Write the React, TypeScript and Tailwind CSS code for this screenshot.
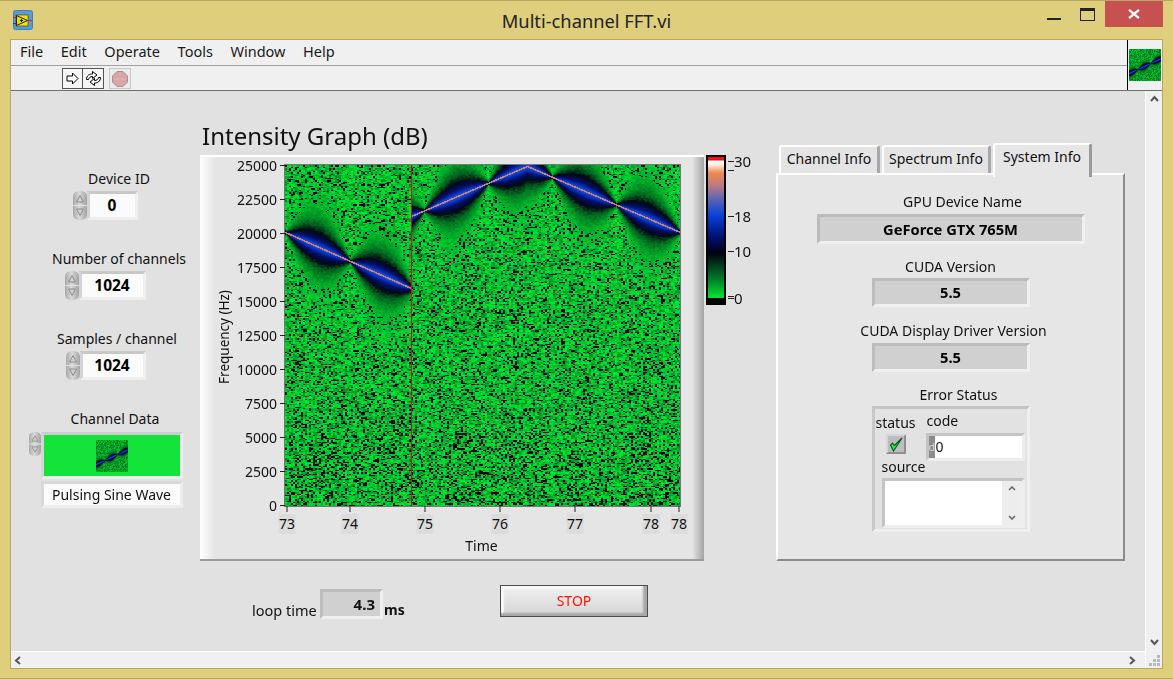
import { useEffect, useRef } from "react";

const FONT = "[font-family:'Noto_Sans',sans-serif]";

// colour ramp of the intensity scale: [dB, r, g, b]
const ramp: number[][] = [
  [0, 0, 235, 50],
  [3, 0, 175, 40],
  [7, 0, 95, 30],
  [10, 0, 8, 18],
  [14, 0, 15, 110],
  [18, 10, 65, 215],
  [22, 105, 105, 175],
  [26, 240, 135, 80],
  [30, 255, 250, 240],
];

const colorAt = (v: number) => {
  if (v < 0) return [4, 4, 4];
  for (let i = 1; i < ramp.length; i++) {
    if (v <= ramp[i][0]) {
      const a = ramp[i - 1];
      const b = ramp[i];
      const t = (v - a[0]) / (b[0] - a[0]);
      return [a[1] + (b[1] - a[1]) * t, a[2] + (b[2] - a[2]) * t, a[3] + (b[3] - a[3]) * t];
    }
  }
  return [255, 255, 255];
};

const rnd = (a: number, b: number) => {
  let h = (a * 374761393 + b * 668265263) | 0;
  h = Math.imul(h ^ (h >>> 13), 1274126177);
  h = Math.imul(h ^ (h >>> 16), 2246822519);
  return ((h ^ (h >>> 14)) >>> 0) / 4294967296;
};

const chirp = (x: number) => {
  if (x < 126) return { y: 67 + (56 / 126) * x, zero: 65 };
  if (x < 242) return { y: 51 - (50 / 116) * (x - 126), zero: 11 };
  return { y: 1 + (66 / 153) * (x - 242), zero: 11 };
};

const drawGraph = (c: HTMLCanvasElement) => {
  const ctx = c.getContext("2d");
  if (!ctx) return;
  const img = ctx.createImageData(c.width, c.height);
  for (let py = 0; py < c.height; py++) {
    for (let px = 0; px < c.width; px++) {
      const col = Math.floor(px / 2);
      const row = Math.floor(py / 1.34);
      const { y, zero } = chirp(px);
      const phase = Math.abs(Math.sin((Math.PI * (px - zero)) / 64));
      const d = Math.abs(py - y);
      const range = 1.5 + 19 * phase;
      const sig = d < 0.8 ? 25 : 20 * Math.exp(-d / range);
      const pinch = phase < 0.12 ? 0.5 : 1;
      const black = (0.15 + (0.05 * py) / c.height + (py > 265 ? 0.05 : 0)) * pinch;
      const isBlack = rnd(col, row) < black;
      const fade = Math.min(1, sig / 6);
      const jitter = (rnd(col + 511, row + 77) - 0.5) * 1.6;
      const smooth = sig > 1.5 && sig < 10 ? sig + jitter : sig;
      const noise = Math.pow(rnd(row + 991, col + 37), 1.5) * 5.5 * (1 - fade * 0.7);
      const v = isBlack && fade < 0.45 ? -1 : Math.max(smooth, noise);
      const [r, g, b] = px === 126 ? [208, 16, 16] : colorAt(v);
      const i = (py * c.width + px) * 4;
      img.data[i] = r;
      img.data[i + 1] = g;
      img.data[i + 2] = b;
      img.data[i + 3] = 255;
    }
  }
  ctx.putImageData(img, 0, 0);
};

const drawThumb = (c: HTMLCanvasElement) => {
  const ctx = c.getContext("2d");
  if (!ctx) return;
  const img = ctx.createImageData(32, 32);
  for (let py = 0; py < 32; py++) {
    for (let px = 0; px < 32; px++) {
      const y = 24 - px * 0.47;
      const phase = Math.abs(Math.sin((Math.PI * (px - 8.5)) / 13));
      const d = Math.abs(py - y);
      const sig = 19 * Math.exp(-d / (0.5 + 3.2 * phase));
      const noise = 1.5 + rnd(px, py) * 5;
      const [r, g, b] = colorAt(Math.max(sig, noise));
      const i = (py * 32 + px) * 4;
      img.data[i] = r;
      img.data[i + 1] = g;
      img.data[i + 2] = b;
      img.data[i + 3] = 255;
    }
  }
  ctx.putImageData(img, 0, 0);
};

const Thumb = () => {
  const ref = useRef<HTMLCanvasElement>(null);
  useEffect(() => {
    if (ref.current) drawThumb(ref.current);
  }, []);
  return <canvas ref={ref} width={32} height={32} className="block h-8 w-8" />;
};

const Graph = () => {
  const ref = useRef<HTMLCanvasElement>(null);
  useEffect(() => {
    if (ref.current) drawGraph(ref.current);
  }, []);
  return <canvas ref={ref} width={395} height={341} className="block h-[341px] w-[395px]" />;
};

const Spinner = ({ w = 14, h = 14.5 }: { w?: number; h?: number }) => (
  <svg width={w} height={h * 2} viewBox="0 0 14 29" preserveAspectRatio="none" className="shrink-0">
    <defs>
      <linearGradient id="sp" x1="0" y1="0" x2="1" y2="0">
        <stop offset="0" stopColor="#a8a8a8" />
        <stop offset="0.45" stopColor="#dadada" />
        <stop offset="1" stopColor="#a2a2a2" />
      </linearGradient>
    </defs>
    <path d="M0 14V6Q0 0 7 0T14 6V14Z" fill="url(#sp)" />
    <path d="M0 15V23Q0 29 7 29T14 23V15Z" fill="url(#sp)" />
    <path d="M7 4.5L10.5 11H3.5Z" fill="#cfcfcf" stroke="#8c8c8c" />
    <path d="M7 24.5L10.5 18H3.5Z" fill="#cfcfcf" stroke="#8c8c8c" />
  </svg>
);

const Numeric = ({ value, width }: { value: string; width: string }) => (
  <div className="flex items-stretch">
    <Spinner />
    <div
      className={`${width} h-[29px] border-[3px] border-t-[#c8c8c8] border-l-[#d4d4d4] border-r-[#efefef] border-b-[#efefef] bg-[#fbfbfb] pr-[1px] text-center text-[15.5px] font-bold leading-[23px] text-black`}
    >
      {value}
    </div>
  </div>
);

const Readout = ({ value, width }: { value: string; width: string }) => (
  <div
    className={`${width} border-[3px] border-t-[#bcbcbc] border-l-[#bcbcbc] border-r-[#f0f0f0] border-b-[#f0f0f0] bg-[#d0d0d0] text-center text-[14.7px] font-bold text-black`}
  >
    {value}
  </div>
);

const yTicks = ["25000", "22500", "20000", "17500", "15000", "12500", "10000", "7500", "5000", "2500", "0"];
const xTicks = [
  { label: "73", x: 2 },
  { label: "74", x: 65 },
  { label: "75", x: 140 },
  { label: "76", x: 215 },
  { label: "77", x: 290 },
  { label: "78", x: 366 },
  { label: "78", x: 394 },
];

const scaleTicks = [
  { label: "30", y: 6 },
  { label: "18", y: 61 },
  { label: "10", y: 96 },
  { label: "0", y: 143 },
];

const Tab = ({ label, width, active }: { label: string; width: string; active?: boolean }) => (
  <div
    className={
      active
        ? `${width} relative z-10 h-[34px] rounded-t-[3px] border-t-2 border-l-2 border-r-[3px] border-t-white border-l-white border-r-[#9a9a9a] bg-[#e6e6e6] pt-[2px] text-center text-[14px] leading-5`
        : `${width} mb-[4px] h-[28px] rounded-t-[3px] border-t-2 border-l-2 border-r-[3px] border-t-white border-l-white border-r-[#a8a8a8] bg-[#e4e4e4] pt-[2px] text-center text-[14px] leading-5`
    }
  >
    {label}
  </div>
);

export default function App() {
  return (
    <div className={`${FONT} flex h-[679px] w-[1173px] flex-col overflow-hidden bg-[#dfcf7c] text-[14px] text-[#111]`}>
      {/* title bar */}
      <div className="grid h-[39px] shrink-0 grid-cols-[1fr_auto_1fr] border-t border-[#b8a763]">
        <div className="pl-[13px] pt-[9px]">
          <svg width="20" height="20" viewBox="0 0 20 20">
            <rect x="0.5" y="0.5" width="19" height="19" rx="2" fill="#5b9bd5" stroke="#3f7fbf" />
            <rect x="3" y="5" width="12" height="11" fill="#f2e500" stroke="#333" strokeWidth="0.6" />
            <path d="M3.5 5.5L14.5 10.5L3.5 15.5Z" fill="#e8d900" stroke="#222" />
            <path d="M7 10.5H10M8.5 9V12" stroke="#111" />
            <path d="M15 10.5H19" stroke="#e02020" />
            <path d="M0 7.5H3" stroke="#e02020" />
            <path d="M0 13.5H3" stroke="#2030d0" />
          </svg>
        </div>
        <div className="pt-[7px] text-[18.3px] leading-[26px] text-[#222]">Multi-channel FFT.vi</div>
        <div className="flex justify-end">
          <div className="mt-[17px] h-[2px] w-[14px] bg-[#222]" />
          <div className="ml-[19px] mt-[7px] h-[13px] w-[15px] border border-t-[3px] border-[#222]" />
          <div className="ml-[10px] mr-[10px] flex h-[26px] w-[58px] items-center justify-center bg-[#c75050]">
            <svg width="12" height="10" viewBox="0 0 12 10">
              <path d="M1 0.8L11 9.2M11 0.8L1 9.2" stroke="#fff" strokeWidth="2.2" />
            </svg>
          </div>
        </div>
      </div>

      {/* client area */}
      <div className="mx-[10px] flex min-h-0 flex-1 flex-col border-l border-r border-b border-t border-[#b8a763] bg-[#f0f0f0]">
        <div className="flex h-[51px] shrink-0 border-b border-[#6e6e6e]">
          <div className="flex min-w-0 flex-1 flex-col">
            <div className="flex h-[26px] items-center gap-[17.6px] border-b border-[#a0a0a0] pb-[2px] pl-[9px] text-[14.5px] text-[#1a1a1a]">
              <span>File</span>
              <span>Edit</span>
              <span>Operate</span>
              <span>Tools</span>
              <span>Window</span>
              <span>Help</span>
            </div>
            <div className="flex items-start pl-[51px] pt-[2px]">
              <div className="flex h-[21px] border border-[#555]">
                <div className="flex w-[20px] items-center justify-center border-r border-[#555] bg-[#f6f6f6]">
                  <svg width="13" height="13" viewBox="0 0 13 13">
                    <path d="M1 4H6.5V1L12 6.5L6.5 12V9H1Z" fill="#fff" stroke="#000" />
                  </svg>
                </div>
                <div className="flex w-[20px] items-center justify-center bg-[#f6f6f6]">
                  <svg width="17" height="17" viewBox="0 0 17 17">
                    <path d="M1.5 9.5C1.5 5.5 4.5 4 7.5 4V1.5L12 5L7.5 8.5V6.5C5.5 6.5 4 7.5 3.5 9.5Z" fill="#fff" stroke="#000" />
                    <path d="M15.5 7.5C15.5 11.5 12.5 13 9.5 13V15.5L5 12L9.5 8.5V10.5C11.5 10.5 13 9.5 13.5 7.5Z" fill="#fff" stroke="#000" />
                  </svg>
                </div>
              </div>
              <div className="ml-[5px] flex h-[21px] w-[22px] items-center justify-center border border-[#c8c8c8] bg-[#ececec]">
                <svg width="16" height="16" viewBox="0 0 16 16">
                  <path d="M5 0.5H11L15.5 5V11L11 15.5H5L0.5 11V5Z" fill="#d9a5a5" stroke="#a89090" />
                  <path d="M1.5 8H14.5" stroke="#e4bcbc" />
                </svg>
              </div>
            </div>
          </div>
          <div className="flex w-[35px] items-center justify-center border-l border-black">
            <Thumb />
          </div>
        </div>

        <div className="flex min-h-0 flex-1">
          <div className="min-w-0 flex-1">
            {/* front panel */}
            <div className="flex h-[560px] w-[1135px] items-start bg-[#e1e1e1]">
              {/* left controls */}
              <div className="flex w-[189px] shrink-0 flex-col items-center pt-[78px]">
                <div className="pl-[27px] leading-5">Device ID</div>
                <div className="mt-[2px]">
                  <Numeric value="0" width="w-[51px]" />
                </div>
                <div className="mt-[29px] pl-[27px] leading-5">Number of channels</div>
                <div className="mt-[2px]">
                  <Numeric value="1024" width="w-[67px]" />
                </div>
                <div className="mt-[29px] pl-[23px] leading-5">Samples / channel</div>
                <div className="mt-[2px]">
                  <Numeric value="1024" width="w-[66px]" />
                </div>
                <div className="mt-[29px] pl-[19px] leading-5">Channel Data</div>
                <div className="mt-[3px] flex">
                  <div className="mr-0">
                    <Spinner w={12} h={12} />
                  </div>
                  <div className="flex w-[142px] flex-col">
                    <div className="flex h-[47px] items-center justify-center border-[3px] border-t-[#cdcdcd] border-l-[#d6d6d6] border-r-[#ededed] border-b-[#ededed] bg-[#14e43a]">
                      <Thumb />
                    </div>
                    <div className="mt-[2px] h-[27px] border-[3px] border-t-[#d8d8d8] border-l-[#d8d8d8] border-r-[#ededed] border-b-[#ededed] bg-[#fbfbfb] text-center leading-[21px]">
                      Pulsing Sine Wave
                    </div>
                  </div>
                </div>
              </div>

              {/* graph column */}
              <div className="w-[576px] shrink-0 pt-[31px]">
                <div className="h-[33px] pl-[2px] text-[24px] leading-[28px]">Intensity Graph (dB)</div>
                <div className="flex items-start">
                  <div className="relative h-[406px] w-[504px] shrink-0 border-t-2 border-b-2 border-t-white border-b-[#9c9c9c] bg-[linear-gradient(to_right,#ffffff,#e5e5e5_15px,#e5e5e5_calc(100%-12px),#a4a4a4)] pl-[85px] pt-[8px]">
                    <div className="relative h-[341px] w-[395px] outline outline-1 outline-[#777]">
                      <Graph />
                      {yTicks.map((t, i) => (
                        <div key={t} className="absolute right-full flex h-4 items-center" style={{ top: i * 34 - 8 }}>
                          <span className="relative top-[1px] text-[14px] leading-4 text-[#111]">{t}</span>
                          <span className="ml-[3px] h-px w-[5px] bg-[#222]" />
                        </div>
                      ))}
                      {xTicks.map((t, i) => (
                        <div key={i} className="absolute top-full flex w-[17px] -translate-x-1/2 flex-col items-center" style={{ left: t.x }}>
                          <span className="h-[6px] w-px bg-[#222]" />
                          <span className="mt-[2px] h-5 w-[17px] bg-[#dcdcdc] text-center text-[14px] leading-5 text-[#111]">{t.label}</span>
                        </div>
                      ))}
                      <div className="absolute left-[-61px] top-[162px] w-0 whitespace-nowrap">
                        <span className="absolute left-0 top-0 -translate-x-1/2 -rotate-90 text-[13.5px] leading-5">Frequency (Hz)</span>
                      </div>
                      <div className="absolute left-0 right-0 top-[371px] pr-[2px] text-center leading-5">Time</div>
                    </div>
                  </div>

                  {/* colour scale */}
                  <div className="relative ml-[2px] h-[150px] w-[20px] shrink-0 border-2 border-b-[7px] border-black bg-[linear-gradient(to_bottom,#f01010_0,#f01010_3px,#ffffff_4px,#fff5ea_7px,#f0884f_16px,#c07a80_28px,#6868b0_40px,#0a41d8_58px,#001070_80px,#000010_96px,#003018_106px,#007a28_122px,#00e033_140px)]">
                    {scaleTicks.map((t) => (
                      <div key={t.label} className="absolute left-[20px] flex h-5 items-center" style={{ top: t.y - 12 }}>
                        <span className="h-px w-[6px] bg-[#222]" />
                        <span className="text-[15px] leading-5">{t.label}</span>
                      </div>
                    ))}
                    <span className="absolute left-[20px] top-[13px] h-px w-[6px] bg-[#222]" />
                    <span className="absolute left-[20px] top-[139px] h-px w-[6px] bg-[#222]" />
                  </div>
                </div>

                {/* loop time and stop */}
                <div className="flex items-start pl-[52px] pt-[24px]">
                  <div className="mt-[4px] flex w-[248px] items-end">
                    <span className="mb-[-1px] w-[65px] text-[14.5px] leading-5">loop time</span>
                    <div className="ml-[3px] h-[30px] w-[63px] border-[3px] border-t-[#bcbcbc] border-l-[#bcbcbc] border-r-[#f0f0f0] border-b-[#f0f0f0] bg-[#d0d0d0] pr-[5px] text-right text-[15px] font-bold leading-[24px]">
                      4.3
                    </div>
                    <span className="mb-[-1px] ml-[1px] text-[14px] font-bold leading-5">ms</span>
                  </div>
                  <div className="h-[32px] w-[148px] border border-[#4d4d4d] bg-[linear-gradient(to_bottom,#f2f2f2,#d4d4d4)] text-center text-[14px] leading-[30px] text-[#ff1010] shadow-[inset_-4px_-3px_2px_#a8a8a8,inset_3px_3px_1px_#f8f8f8]">
                    STOP
                  </div>
                </div>
              </div>

              {/* tab control */}
              <div className="w-[349px] shrink-0 pt-[52px]">
                <div className="relative flex items-end gap-[2px] pl-[3px]">
                  <Tab label="Channel Info" width="w-[101px]" />
                  <Tab label="Spectrum Info" width="w-[109px]" />
                  <Tab label="System Info" width="w-[99px]" active />
                </div>
                <div className="-mt-[4px] flex h-[388px] flex-col items-center border-2 border-t-white border-l-white border-r-[#8c8c8c] border-b-[#8c8c8c] bg-[#e6e6e6] pt-[17px]">
                  <div className="pl-[24px] leading-5">GPU Device Name</div>
                  <div className="mt-[2px]">
                    <Readout value="GeForce GTX 765M" width="w-[268px] h-[30px] leading-[24px]" />
                  </div>
                  <div className="mt-[13px] leading-5">CUDA Version</div>
                  <div className="mt-[1px]">
                    <Readout value="5.5" width="w-[158px] h-[29px] leading-[23px]" />
                  </div>
                  <div className="mt-[14px] pl-[6px] leading-5">CUDA Display Driver Version</div>
                  <div className="mt-[2px]">
                    <Readout value="5.5" width="w-[158px] h-[29px] leading-[23px]" />
                  </div>
                  <div className="mt-[13px] pl-[16px] leading-5">Error Status</div>
                  <div className="mt-[1px] h-[126px] w-[158px] border-[3px] border-t-[#c4c4c4] border-l-[#c8c8c8] border-r-[#f0f0f0] border-b-[#f0f0f0] bg-[#e2e2e2] pl-[2px]">
                    <div className="flex">
                      <div className="mr-[12px] flex w-[38px] flex-col items-center pt-[4px]">
                        <span className="leading-5">status</span>
                        <div className="mt-[1px] flex h-5 w-5 items-center justify-center border-2 border-t-[#d6d6d6] border-l-[#d6d6d6] border-r-[#8f8f8f] border-b-[#8f8f8f] bg-[#bdbdbd]">
                          <svg width="14" height="15" viewBox="0 0 14 15">
                            <path d="M1.5 8L4.5 14L13 1L5.5 8.5L3.5 6Z" fill="#19ef3c" stroke="#052" strokeWidth="1.1" />
                          </svg>
                        </div>
                      </div>
                      <div className="flex-1 pr-[2px] pt-[2px]">
                        <span className="block leading-5">code</span>
                        <div className="-ml-[1px] mt-[2px] flex h-[28px] border-[3px] border-t-[#c4c4c4] border-l-[#c4c4c4] border-r-[#eeeeee] border-b-[#eeeeee] bg-white">
                          <span className="w-[6px] bg-[#8c8c8c] text-[11px] leading-[22px] text-[#d8d8d8]">d</span>
                          <span className="pl-[1px] leading-[22px]">0</span>
                        </div>
                      </div>
                    </div>
                    <div className="-mt-[3px] pl-[5px] leading-[17px]">source</div>
                    <div className="ml-[5px] mr-[2px] mt-[3px] flex h-[50px] border-[3px] border-t-[#c4c4c4] border-l-[#c4c4c4] border-r-[#eeeeee] border-b-[#eeeeee] bg-white">
                      <div className="flex-1" />
                      <div className="flex w-[20px] flex-col items-center justify-between bg-[#ededed] py-[5px]">
                        <svg width="8" height="5" viewBox="0 0 8 5">
                          <path d="M1 4L4 1L7 4" fill="none" stroke="#666" strokeWidth="1.5" />
                        </svg>
                        <svg width="8" height="5" viewBox="0 0 8 5">
                          <path d="M1 1L4 4L7 1" fill="none" stroke="#666" strokeWidth="1.5" />
                        </svg>
                      </div>
                    </div>
                  </div>
                </div>
              </div>
            </div>
            {/* horizontal scrollbar */}
            <div className="flex h-[17px] items-center justify-between border-t border-white px-[3px]">
              <svg width="7" height="9" viewBox="0 0 7 9">
                <path d="M6 1L2 4.5L6 8" fill="none" stroke="#555" strokeWidth="2" />
              </svg>
              <svg width="7" height="9" viewBox="0 0 7 9" className="mr-[6px]">
                <path d="M1 1L5 4.5L1 8" fill="none" stroke="#555" strokeWidth="2" />
              </svg>
            </div>
          </div>
          {/* vertical scrollbar */}
          <div className="flex w-[17px] shrink-0 flex-col items-center border-l border-white pt-[4px]">
            <svg width="9" height="7" viewBox="0 0 9 7" className="shrink-0">
              <path d="M1 6L4.5 2L8 6" fill="none" stroke="#555" strokeWidth="2" />
            </svg>
            <svg width="9" height="7" viewBox="0 0 9 7" className="mt-[537px] shrink-0">
              <path d="M1 1L4.5 5L8 1" fill="none" stroke="#555" strokeWidth="2" />
            </svg>
            <svg width="13" height="12" viewBox="0 0 13 12" className="mt-[9px] shrink-0">
              <path d="M9 0h3v3H9zM5 4h3v3H5zM9 4h3v3H9zM1 8h3v3H1zM5 8h3v3H5zM9 8h3v3H9z" fill="#b8b8b8" />
            </svg>
          </div>
        </div>
      </div>
      <div className="h-[10px] shrink-0 border-b border-[#b8a763]" />
    </div>
  );
}
